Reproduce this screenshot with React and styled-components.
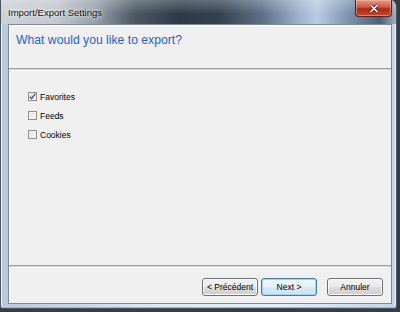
import React from "react";
import styled, { createGlobalStyle } from "styled-components";

const GlobalStyle = createGlobalStyle`
  html, body {
    margin: 0;
    padding: 0;
    background: #3a3c3f;
    font-family: "Liberation Sans", Arial, sans-serif;
  }
  #root {
    width: 400px;
    height: 312px;
    overflow: hidden;
  }
`;

const Window = styled.div`
  width: 397px;
  height: 309px;
  box-sizing: border-box;
  display: flex;
  flex-direction: column;
  border: 1px solid #4b5662;
  border-top: none;
  border-radius: 0 7px 3px 3px;
  padding: 0 4px 4px 7px;
  background: linear-gradient(90deg, #b7c9dc 0%, #dfeaf5 40%, #e4eef8 70%, #c3d6ea 100%);
  box-shadow: inset 1px 0 0 #eef5fc, inset -1px 0 0 #eef5fc, inset 0 -1px 0 #9db7d3;
`;

const TitleBar = styled.div`
  height: 24px;
  margin: 0 -4px 0 -7px;
  padding: 0 4px 0 7px;
  display: flex;
  align-items: flex-start;
  border-radius: 0 7px 0 0;
  background:
    linear-gradient(180deg, rgba(255,255,255,0.25) 0%, rgba(255,255,255,0) 60%),
    linear-gradient(90deg, #cdd2d8 0%, #c2c8cf 14%, #939ea9 24%, #4a5662 34%, #2e3a47 45%, #33404e 55%, #5b6f86 66%, #9fb7cf 76%, #b7cde3 80%, #7b93ad 88%, #4b5f75 96%, #a2b2c2 100%);
`;

const Title = styled.span`
  margin-top: 7px;
  font-size: 9.5px;
  color: #111;
  text-shadow: 0 0 6px rgba(255,255,255,0.9), 0 0 3px rgba(255,255,255,0.9);
`;

const CloseButton = styled.div`
  margin-left: auto;
  width: 37px;
  height: 17px;
  box-sizing: border-box;
  border: 1px solid #5a2218;
  border-top: none;
  border-radius: 0 0 4px 4px;
  background: linear-gradient(180deg, #e49a86 0%, #cf5a43 45%, #b02a14 55%, #c6462d 100%);
  box-shadow: inset 0 0 0 1px rgba(255,200,190,0.45);
  display: flex;
  align-items: center;
  justify-content: center;
`;

const Client = styled.div`
  flex: 1;
  display: flex;
  flex-direction: column;
  background: #f0f0f0;
  border: 1px solid #7e8996;
  box-shadow: inset 1px 1px 0 #ffffff;
`;

const Header = styled.div`
  height: 43px;
  padding: 8px 0 0 7px;
  box-sizing: border-box;
`;

const Heading = styled.h1`
  margin: 0;
  font-weight: normal;
  font-size: 12.2px;
  line-height: 15px;
  color: #1e64d2;
`;

const Separator = styled.div`
  height: 3px;
  box-sizing: border-box;
  border-top: 1px solid #a0a0a0;
  border-bottom: 1px solid #ffffff;
  background: #d5d5d5;
`;

const Body = styled.div`
  flex: 1;
  padding: 16px 0 0 19px;
  display: flex;
  flex-direction: column;
`;

const Row = styled.label`
  height: 19px;
  display: flex;
  align-items: center;
  gap: 3px;
  font-size: 8.5px;
  color: #000;
`;

const Box = styled.span`
  width: 9px;
  height: 9px;
  box-sizing: border-box;
  border: 1px solid #8e8f8f;
  background: linear-gradient(135deg, #dcdcdc 0%, #f4f4f4 70%, #fdfdfd 100%);
  box-shadow: inset 0 0 0 1px #f4f4f4;
  display: flex;
  align-items: center;
  justify-content: center;
`;

const Footer = styled.div`
  height: 35px;
  display: flex;
  justify-content: flex-end;
  align-items: flex-start;
  padding: 10px 8px 0 0;
  box-sizing: border-box;
`;

const Button = styled.button`
  width: 56px;
  height: 18px;
  margin-left: ${(p) => p.$gap}px;
  padding: 0;
  font-family: "Liberation Sans", Arial, sans-serif;
  font-size: 8.5px;
  color: #000;
  border-radius: 3px;
  border: 1px solid ${(p) => (p.$default ? "#3c7fb1" : "#707070")};
  background: ${(p) =>
    p.$default
      ? "linear-gradient(180deg, #f2f8fc 0%, #e6f1f9 50%, #d7e8f4 51%, #cfe3f1 100%)"
      : "linear-gradient(180deg, #f2f2f2 0%, #ebebeb 50%, #dddddd 51%, #cfcfcf 100%)"};
  box-shadow: inset 0 0 0 1px ${(p) => (p.$default ? "#9fd3f3" : "#fcfcfc")};
`;

function Check({ checked, label }) {
  return (
    <Row>
      <Box>
        {checked && (
          <svg width="7" height="7" viewBox="0 0 7 7">
            <path d="M0.8 3.6 L2.6 5.6 L6.3 0.6" fill="none" stroke="#3b4f8c" strokeWidth="1.3" />
          </svg>
        )}
      </Box>
      {label}
    </Row>
  );
}

export default function App() {
  return (
    <>
      <GlobalStyle />
      <Window>
        <TitleBar>
          <Title>Import/Export Settings</Title>
          <CloseButton>
            <svg width="10" height="9" viewBox="0 0 10 9">
              <path d="M1.5 1 L8.5 8 M8.5 1 L1.5 8" stroke="#4a1b12" strokeWidth="3" />
              <path d="M1.5 1 L8.5 8 M8.5 1 L1.5 8" stroke="#ffffff" strokeWidth="1.6" />
            </svg>
          </CloseButton>
        </TitleBar>
        <Client>
          <Header>
            <Heading>What would you like to export?</Heading>
          </Header>
          <Separator />
          <Body>
            <Check checked label="Favorites" />
            <Check label="Feeds" />
            <Check label="Cookies" />
          </Body>
          <Separator />
          <Footer>
            <Button $gap={0}>&lt; Précédent</Button>
            <Button $gap={3} $default>Next &gt;</Button>
            <Button $gap={10}>Annuler</Button>
          </Footer>
        </Client>
      </Window>
    </>
  );
}
